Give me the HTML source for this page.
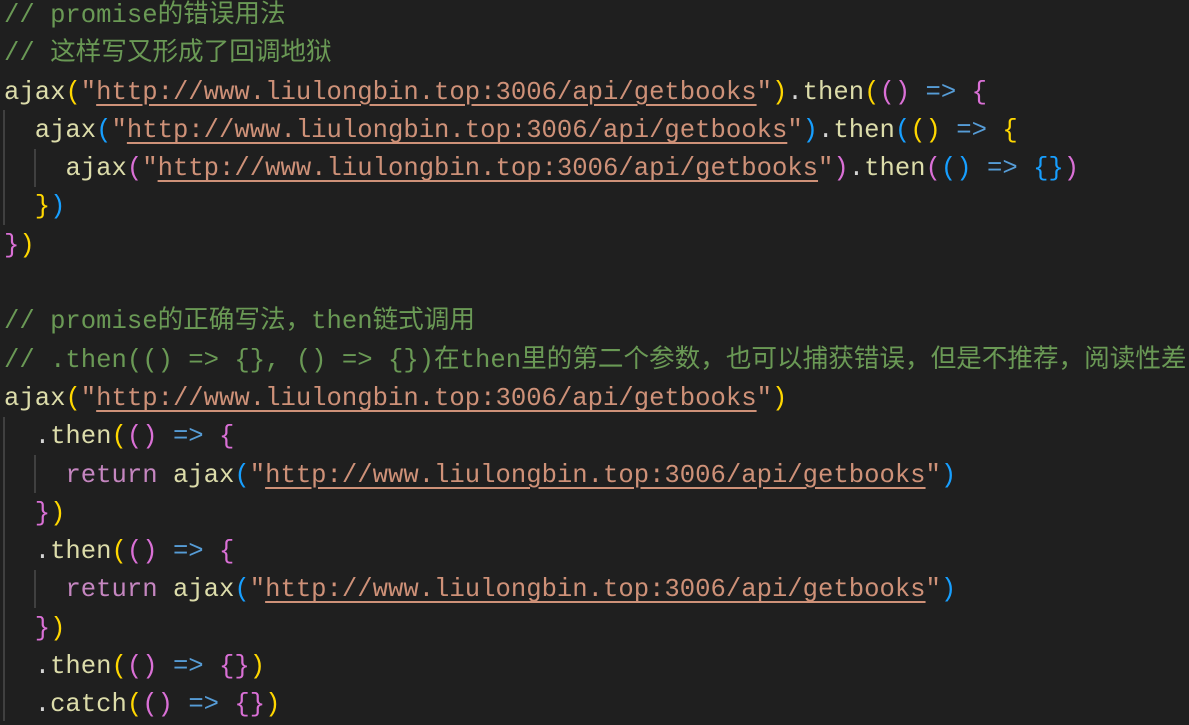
<!DOCTYPE html>
<html><head><meta charset="utf-8"><style>
html,body{margin:0;padding:0;background:#1f1f1f;width:1189px;height:720px;overflow:hidden}
#c{position:absolute;left:4px;top:-3px;font-family:"Liberation Mono","Noto Sans CJK SC",monospace;font-size:25.6px;color:#d4d4d4}
.l{height:38.3px;line-height:38.3px;white-space:pre}
.cm{color:#6a9955}.f{color:#dcdcaa}.s{color:#ce9178}.u{text-decoration:underline;text-decoration-color:#ce9178;text-underline-offset:5px;text-decoration-thickness:2px}
.y{color:#ffd700}.p{color:#da70d6}.b{color:#179fff}.k{color:#569cd6}.r{color:#c586c0}
.g{position:absolute;width:2px;background:#404040}
</style></head><body>
<div class="g" style="left:3px;top:110px;height:115px"></div>
<div class="g" style="left:34px;top:149px;height:38px"></div>
<div class="g" style="left:3px;top:417px;height:304px"></div>
<div class="g" style="left:34px;top:455px;height:38px"></div>
<div class="g" style="left:34px;top:570px;height:38px"></div>
<div id="c">
<div class="l cm">// promise的错误用法</div>
<div class="l cm">// 这样写又形成了回调地狱</div>
<div class="l"><span class="f">ajax</span><span class="y">(</span><span class="s">"<span class="u">http://www.liulongbin.top:3006/api/getbooks</span>"</span><span class="y">)</span>.<span class="f">then</span><span class="y">(</span><span class="p">()</span> <span class="k">=&gt;</span> <span class="p">{</span></div>
<div class="l">  <span class="f">ajax</span><span class="b">(</span><span class="s">"<span class="u">http://www.liulongbin.top:3006/api/getbooks</span>"</span><span class="b">)</span>.<span class="f">then</span><span class="b">(</span><span class="y">()</span> <span class="k">=&gt;</span> <span class="y">{</span></div>
<div class="l">    <span class="f">ajax</span><span class="p">(</span><span class="s">"<span class="u">http://www.liulongbin.top:3006/api/getbooks</span>"</span><span class="p">)</span>.<span class="f">then</span><span class="p">(</span><span class="b">()</span> <span class="k">=&gt;</span> <span class="b">{}</span><span class="p">)</span></div>
<div class="l">  <span class="y">}</span><span class="b">)</span></div>
<div class="l"><span class="p">}</span><span class="y">)</span></div>
<div class="l"> </div>
<div class="l cm">// promise的正确写法，then链式调用</div>
<div class="l cm">// .then(() =&gt; {}, () =&gt; {})在then里的第二个参数，也可以捕获错误，但是不推荐，阅读性差</div>
<div class="l"><span class="f">ajax</span><span class="y">(</span><span class="s">"<span class="u">http://www.liulongbin.top:3006/api/getbooks</span>"</span><span class="y">)</span></div>
<div class="l">  .<span class="f">then</span><span class="y">(</span><span class="p">()</span> <span class="k">=&gt;</span> <span class="p">{</span></div>
<div class="l">    <span class="r">return</span> <span class="f">ajax</span><span class="b">(</span><span class="s">"<span class="u">http://www.liulongbin.top:3006/api/getbooks</span>"</span><span class="b">)</span></div>
<div class="l">  <span class="p">}</span><span class="y">)</span></div>
<div class="l">  .<span class="f">then</span><span class="y">(</span><span class="p">()</span> <span class="k">=&gt;</span> <span class="p">{</span></div>
<div class="l">    <span class="r">return</span> <span class="f">ajax</span><span class="b">(</span><span class="s">"<span class="u">http://www.liulongbin.top:3006/api/getbooks</span>"</span><span class="b">)</span></div>
<div class="l">  <span class="p">}</span><span class="y">)</span></div>
<div class="l">  .<span class="f">then</span><span class="y">(</span><span class="p">()</span> <span class="k">=&gt;</span> <span class="p">{}</span><span class="y">)</span></div>
<div class="l">  .<span class="f">catch</span><span class="y">(</span><span class="p">()</span> <span class="k">=&gt;</span> <span class="p">{}</span><span class="y">)</span></div>
</div>
</body></html>
